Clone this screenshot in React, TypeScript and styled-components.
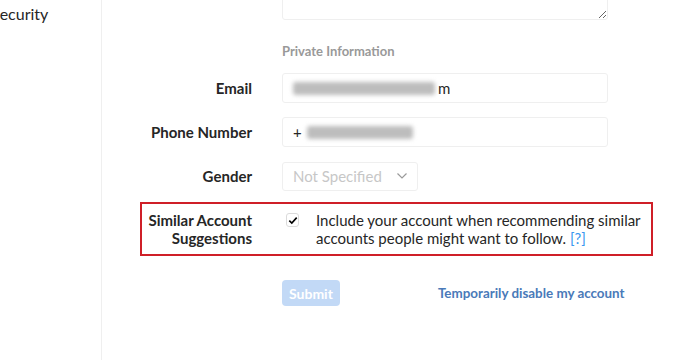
import React from "react";
import styled, { createGlobalStyle } from "styled-components";

const GlobalStyle = createGlobalStyle`
  html, body {
    margin: 0;
    padding: 0;
    background: #ffffff;
    overflow: hidden;
  }
  body {
    font-family: Lato, "Open Sans", sans-serif;
    color: #262626;
  }
`;

const Page = styled.div`
  display: flex;
  width: 700px;
  height: 360px;
  overflow: hidden;
  background: #fff;
`;

const Sidebar = styled.aside`
  width: 101px;
  flex-shrink: 0;
  border-right: 1px solid #efefef;
`;

const SideItem = styled.div`
  margin-left: -9px;
  margin-top: 5px;
  font-size: 16px;
  line-height: 18px;
  color: #262626;
  white-space: nowrap;
`;

const Main = styled.main`
  flex: 1;
  display: flex;
  flex-direction: column;
`;

const Row = styled.div`
  display: grid;
  grid-template-columns: 150px 326px;
  column-gap: 30px;
  align-items: center;
`;

const FieldRow = styled(Row)`
  height: 30px;
  margin-bottom: 14px;
`;

const Label = styled.label<{ $width?: number }>`
  ${({ $width }) => ($width ? `width: ${$width}px; flex-shrink: 0;` : "")}
  text-align: right;
  font-size: 15px;
  font-weight: 700;
  line-height: 18px;
  color: #262626;
  white-space: nowrap;
`;

const TextArea = styled.textarea`
  box-sizing: border-box;
  width: 326px;
  height: 62px;
  margin-top: -42px;
  border: 1px solid #efefef;
  border-radius: 3px;
  resize: vertical;
  font-family: inherit;
`;

const SectionTitle = styled.div`
  margin-top: 22px;
  margin-bottom: 13px;
  font-size: 13px;
  font-weight: 700;
  line-height: 18px;
  color: #999999;
`;

const Input = styled.div`
  box-sizing: border-box;
  height: 30px;
  display: flex;
  align-items: center;
  padding: 0 10px;
  border: 1px solid #efefef;
  border-radius: 3px;
  font-size: 15px;
  color: #262626;
`;

const Blur = styled.span<{ $w: number; $gap?: number }>`
  display: inline-block;
  width: ${({ $w }) => $w}px;
  height: 13px;
  margin: 0 3px 0 ${({ $gap = 0 }) => $gap}px;
  background: #bdbdbd;
  filter: blur(2px);
  border-radius: 3px;
`;

const Select = styled.div`
  box-sizing: border-box;
  width: 136px;
  height: 29px;
  display: flex;
  align-items: center;
  justify-content: space-between;
  padding: 0 9px 0 10px;
  border: 1px solid #efefef;
  border-radius: 3px;
  font-size: 15px;
  color: #c7c7c7;
`;

const Highlight = styled.div`
  box-sizing: border-box;
  display: flex;
  align-items: flex-start;
  width: 513px;
  margin: -3px 0 0 38px;
  padding: 7px 0;
  border: 2px solid #cf1f28;
`;

const Check = styled.span`
  box-sizing: border-box;
  flex-shrink: 0;
  width: 13px;
  height: 14px;
  margin: 2px 17px 0 34px;
  display: flex;
  align-items: center;
  justify-content: center;
  border: 1px solid #dbdbdb;
  border-radius: 3px;
`;

const Description = styled.div`
  font-size: 15px;
  line-height: 18px;
  color: #262626;
  white-space: nowrap;
`;

const HelpLink = styled.a`
  color: #3897f0;
  text-decoration: none;
`;

const Actions = styled(Row)`
  margin-top: 24px;
`;

const ActionGroup = styled.div`
  display: flex;
  align-items: center;
  gap: 98px;
`;

const Submit = styled.button`
  height: 26px;
  padding: 0 7px;
  border: none;
  border-radius: 4px;
  background: #c2d9f6;
  color: #fff;
  font-family: inherit;
  font-size: 14px;
  font-weight: 700;
`;

const DisableLink = styled.a`
  font-size: 13.4px;
  font-weight: 700;
  color: #4a7ab9;
  text-decoration: none;
  white-space: nowrap;
`;

const App: React.FC = () => {
  return (
    <Page>
      <GlobalStyle />
      <Sidebar>
        <SideItem>Security</SideItem>
      </Sidebar>
      <Main>
        <Row>
          <span />
          <TextArea />
        </Row>
        <Row>
          <span />
          <SectionTitle>Private Information</SectionTitle>
        </Row>
        <FieldRow>
          <Label>Email</Label>
          <Input>
            <Blur $w={142} />
            <span>m</span>
          </Input>
        </FieldRow>
        <FieldRow>
          <Label>Phone Number</Label>
          <Input>
            <span>+</span>
            <Blur $w={106} $gap={5} />
          </Input>
        </FieldRow>
        <FieldRow>
          <Label>Gender</Label>
          <Select>
            <span>Not Specified</span>
            <svg width="12" height="8" viewBox="0 0 12 8" fill="none">
              <path d="M1.5 1.5 6 6l4.5-4.5" stroke="#9a9a9a" strokeWidth="1.2" />
            </svg>
          </Select>
        </FieldRow>
        <Highlight>
          <Label $width={110}>
            Similar Account
            <br />
            Suggestions
          </Label>
          <Check>
            <svg width="10" height="9" viewBox="0 0 10 9" fill="none">
              <path d="M1.3 4.6 3.8 7 8.7 1.6" stroke="#000" strokeWidth="1.6" />
            </svg>
          </Check>
          <Description>
            Include your account when recommending similar
            <br />
            accounts people might want to follow. <HelpLink>[?]</HelpLink>
          </Description>
        </Highlight>
        <Actions>
          <span />
          <ActionGroup>
            <Submit disabled>Submit</Submit>
            <DisableLink>Temporarily disable my account</DisableLink>
          </ActionGroup>
        </Actions>
      </Main>
    </Page>
  );
};

export default App;
